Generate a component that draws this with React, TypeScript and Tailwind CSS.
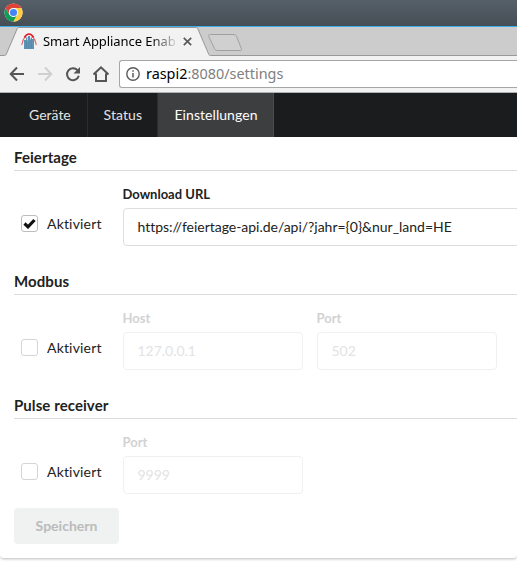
import React from "react";

function ChromeLogo() {
  return (
    <svg width="19" height="19" viewBox="0 0 48 48">
      <circle cx="24" cy="24" r="23" fill="#fff" />
      <path d="M4.1 12.5 A23 23 0 0 0 24 47 L34 29.7 L24 35.5 L14 29.7 Z" fill="#0f9d58" />
      <path d="M43.9 12.5 A23 23 0 0 1 24 47 L34 29.7 A11.5 11.5 0 0 0 24 12.5 Z" fill="#ffcd40" />
      <path d="M4.1 12.5 L14 29.7 A11.5 11.5 0 0 1 24 12.5 L43.9 12.5 A23 23 0 0 0 4.1 12.5" fill="#db4437" />
      <circle cx="24" cy="24" r="11.5" fill="#f1f1f1" />
      <circle cx="24" cy="24" r="9" fill="#4285f4" />
    </svg>
  );
}

function Favicon() {
  return (
    <svg width="16" height="16" viewBox="0 0 16 16" fill="none">
      <path d="M3 16V7h2V4.500h2V3h2v1.500h2V6h2v10z" fill="#5f93b5" />
      <path d="M5.500 7v9M8 4v12M10.500 6v10" stroke="#4d7f9f" strokeWidth=".5" />
      <path d="M6.500 4.500v3M9.500 4v2.500" stroke="#dbe7ef" strokeWidth=".8" />
      <path d="M.7 12C1.500 8 2.500 5.500 4.300 3.300M11.700 3.300C13.500 5.500 14.500 8 15.300 12" stroke="#dc6b6e" strokeWidth="1.200" />
      <path d="M3.500 4.500C6-.2 10-.2 12.500 4.500" stroke="#e01b24" strokeWidth="1.700" />
    </svg>
  );
}

function TabStrip() {
  return (
    <div className="relative h-[29px] bg-[#cccccc]">
      <svg className="absolute left-0 top-0" width="517" height="29" viewBox="0 0 517 29" fill="none">
        <path d="M0 28.500H4.500C5.500 28.500 6 28 6.400 27L17 2C17.500 1 18 .5 19 .5H196C197 .5 197.500 1 198 2L208.500 27C209 28 209.500 28.500 210.500 28.500H517" stroke="#999" />
        <path d="M5 29C6 28.800 6.500 28.200 7 27L17.600 2.400C18 1.400 18.500 1 19.500 1H195.500C196.500 1 197 1.400 197.400 2.400L208 27C208.500 28.200 209 29 210 29Z" fill="#f2f2f2" />
        <path d="M210.500 7.500H233C235 7.500 236 8 236.600 9.500L241.300 21.500C241.800 22.800 241.500 23.500 240 23.500H218C216 23.500 215 23 214.400 21.500L208.800 9.500C208.200 8.200 208.700 7.500 210.500 7.500Z" fill="#d0d0d0" stroke="#a0a0a0" />
      </svg>
      <div className="relative flex h-[28px] items-center pl-[21px]">
        <Favicon />
        <div className="ml-[6px] w-[133px] whitespace-nowrap font-['Noto_Sans',sans-serif] text-[13px] leading-[20px] tracking-[-0.060px] text-black [mask-image:linear-gradient(to_right,black_108px,transparent_136px)]">
          Smart Appliance Enabl
        </div>
        <svg className="ml-[7px]" width="9" height="9" viewBox="0 0 9 9" stroke="#5a5a5a" strokeWidth="1.700">
          <path d="M.8 .8l7.400 7.400M8.200 .8L.8 8.200" />
        </svg>
      </div>
    </div>
  );
}

function Toolbar() {
  return (
    <div className="flex h-[37px] items-center border-b border-[#b0b0b0] bg-[#f2f2f2]">
      <svg className="shrink-0" width="119" height="36" viewBox="0 0 119 36" fill="none" stroke="#555" strokeWidth="2">
        <path d="M24 18H11M17 11.500L10.700 18l6.300 6.500" />
        <path d="M38 18h13M45 11.500l6.300 6.500-6.300 6.500" stroke="#d0d0d0" />
        <path d="M77.500 14.200A6 6 0 1 0 78.800 19.800" />
        <path d="M80 11v6.500h-6.500z" fill="#555" stroke="none" />
        <path d="M93.500 18.500L101 11.300l7.500 7.200M96 17.500V25h10v-7.500" />
      </svg>
      <div className="flex h-[28px] flex-1 items-center rounded-l-[3px] border border-r-0 border-[#a6a6a6] bg-white pl-[6px]">
        <svg width="14" height="14" viewBox="0 0 14 14" fill="none" stroke="#5a5a5a">
          <circle cx="7" cy="7" r="6.200" strokeWidth="1.400" />
          <path d="M7 6v4.500M7 3.300v1.500" strokeWidth="1.500" />
        </svg>
        <div className="ml-[6px] whitespace-nowrap font-['Noto_Sans',sans-serif] text-[14.400px] leading-[20px] text-[#808080]">
          <span className="text-black">raspi2</span>:8080/settings
        </div>
      </div>
    </div>
  );
}

function Section({ title, checked, children }: { title: string; checked?: boolean; children: React.ReactNode }) {
  return (
    <section className="h-[124px] pl-[14px]">
      <h4 className="h-[24px] border-b border-[#dcdddd] text-[15px] font-bold leading-[21px] tracking-[0.080px]">{title}</h4>
      <div className="flex pt-[14px]">
        <label className="flex w-[109px] shrink-0 items-center pl-[7px] pt-[16px]">
          <span className={`flex size-[17px] items-center justify-center rounded-[3px] border ${checked ? "border-[#bcbdbd]" : "border-[#d4d4d5]"}`}>
            {checked && (
              <svg width="13" height="11" viewBox="0 0 13 11" fill="none">
                <path d="M1.500 5.500L5 8.800L11.500 2" stroke="#111" strokeWidth="3.200" />
              </svg>
            )}
          </span>
          <span className="ml-[9px] text-[14px] leading-[17px] tracking-[0.180px]">Aktiviert</span>
        </label>
        {children}
      </div>
    </section>
  );
}

function Field({ label, value, wide, disabled }: { label: string; value: string; wide?: boolean; disabled?: boolean }) {
  return (
    <div className={`mr-[14px] shrink-0 ${wide ? "w-[420px]" : "w-[180px]"}`}>
      <div className={`-ml-[0.500px] h-[23px] text-[13px] font-bold leading-[19px] ${disabled ? "text-[#d2d2d2]" : ""}`}>{label}</div>
      <div className={`flex h-[38px] items-center rounded-[4px] border px-[13.500px] pb-[2px] text-[14px] tracking-[-0.020px] ${disabled ? "border-[#f0f0f0] text-[#e3e3e3]" : "border-[#dededf]"}`}>
        {value}
      </div>
    </div>
  );
}

export default function App() {
  return (
    <div className="h-[566px] w-[517px] overflow-hidden bg-white font-[Lato,sans-serif] text-[#212222]">
      <div className="flex h-[27px] items-center border-b border-[#3daee9] bg-linear-to-b from-[#566069] to-[#464e55] pb-[2px] pl-[4px]">
        <ChromeLogo />
      </div>
      <TabStrip />
      <Toolbar />
      <nav className="flex h-[44px] bg-[#1b1c1d] pl-[13px] text-[14px] leading-[44px] text-[#e4e4e4]">
        <div className="w-[75px] border-r border-[#2c2d2e] pl-[16px]">Geräte</div>
        <div className="w-[70px] border-r border-[#2c2d2e] pl-[15.500px] tracking-[0.100px]">Status</div>
        <div className="w-[116px] border-r border-[#4a4b4c] bg-[#3d3e3f] pl-[16.500px] tracking-[0.060px] text-white">Einstellungen</div>
      </nav>
      <main className="h-[422px] rounded-b-[4px] border-b border-[#d4d4d5] pt-[10px] shadow-[0_1px_2px_0_rgba(34,36,38,0.15)]">
        <Section title="Feiertage" checked>
          <Field label="Download URL" value="https://feiertage-api.de/api/?jahr={0}&nur_land=HE" wide />
        </Section>
        <Section title="Modbus">
          <Field label="Host" value="127.0.0.1" disabled />
          <Field label="Port" value="502" disabled />
        </Section>
        <Section title="Pulse receiver">
          <Field label="Port" value="9999" disabled />
        </Section>
        <button className="-mt-[11px] ml-[14px] block h-[36px] w-[105px] rounded-[4px] bg-[#f0f1f1] pb-[1px] text-[14px] font-bold text-[#babbbb]">
          Speichern
        </button>
      </main>
    </div>
  );
}
